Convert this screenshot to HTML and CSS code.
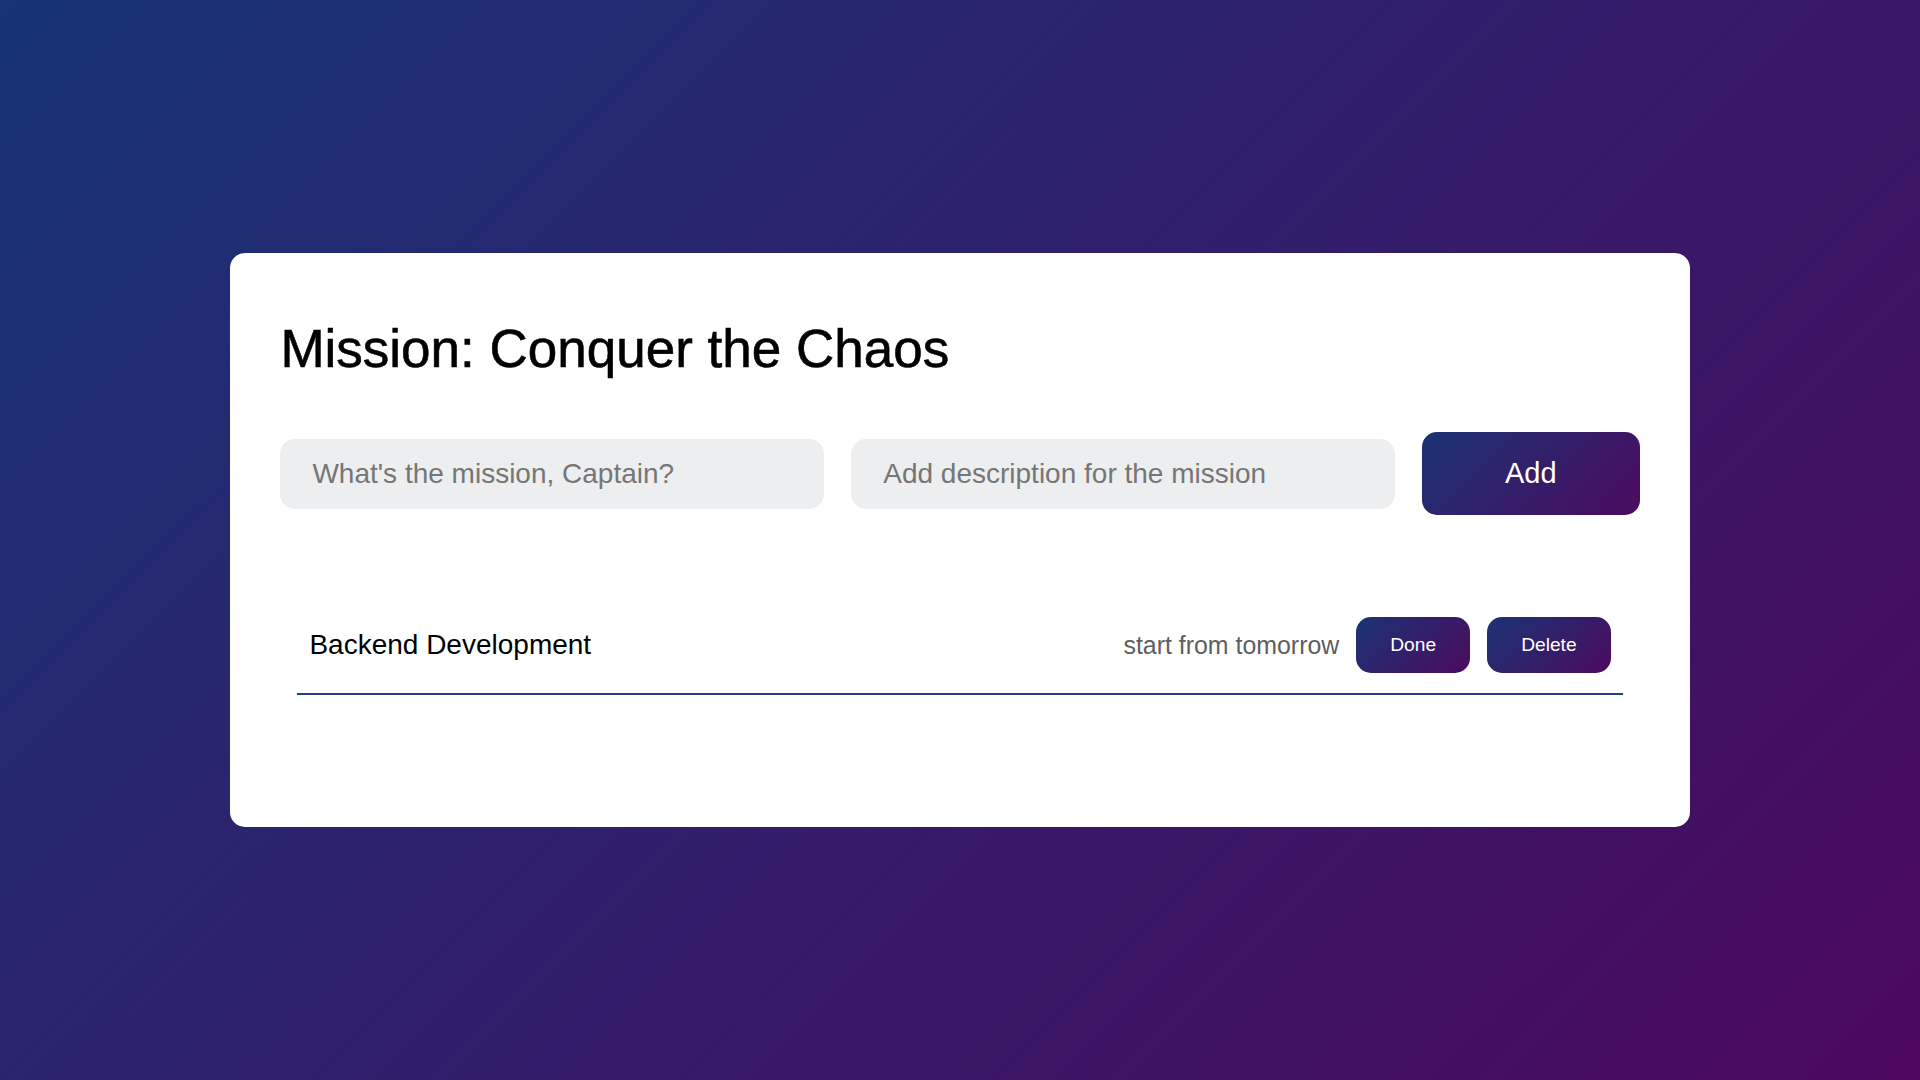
FILE: index.html
```html
<!DOCTYPE html>
<html lang="en">
<head>
<meta charset="UTF-8">
<title>Mission: Conquer the Chaos</title>
<link rel="stylesheet" href="styles.css">
</head>
<body>
<main class="card">
  <h1 class="title">Mission: Conquer the Chaos</h1>
  <form class="add-row">
    <input class="field" type="text" placeholder="What's the mission, Captain?">
    <input class="field" type="text" placeholder="Add description for the mission">
    <button class="add-btn" type="button">Add</button>
  </form>
  <ul class="list">
    <li class="item">
      <span class="item-title">Backend Development</span>
      <div class="item-right">
        <span class="item-desc">start from tomorrow</span>
        <button class="small-btn" type="button">Done</button>
        <button class="small-btn" type="button">Delete</button>
      </div>
    </li>
  </ul>
</main>
</body>
</html>
```

FILE: styles.css
```css
* { box-sizing: border-box; }

html, body {
  margin: 0;
  height: 100%;
}

body {
  font-family: "Liberation Sans", Arial, sans-serif;
  background: linear-gradient(135deg, #173476 0%, #4c085e 100%);
  display: flex;
  align-items: center;
  justify-content: center;
  min-height: 1080px;
}

.card {
  width: 76%;
  background: #ffffff;
  border-radius: 15px;
  padding: 50px;
}

.title {
  margin: 15px 0 0 0;
  font-size: 53px;
  font-weight: 400;
  color: #000;
  line-height: normal;
  -webkit-text-stroke: 0.6px #000;
}

.add-row {
  margin: 53px 0 0 0;
  display: flex;
  align-items: center;
  gap: 2%;
}

.field {
  flex: none;
  width: 40%;
  height: 70px;
  padding: 0 32px;
  border: none;
  border-radius: 15px;
  background: #eceef0;
  font-family: "Liberation Sans", Arial, sans-serif;
  font-size: 28px;
  color: #333;
  outline: none;
}

.field::placeholder {
  color: #767676;
}

.add-btn {
  flex: none;
  width: 16%;
  height: 83px;
  border: none;
  border-radius: 15px;
  background: linear-gradient(135deg, #1b3374 0%, #4c0b5f 100%);
  color: #fff;
  font-family: "Liberation Sans", Arial, sans-serif;
  font-size: 29px;
  cursor: pointer;
}

.list {
  list-style: none;
  margin: 82px 17px 82px 17px;
  padding: 0;
}

.item {
  display: flex;
  align-items: center;
  justify-content: space-between;
  padding: 20px 12px;
  border-bottom: 2px solid #243f7c;
}

.item-title {
  font-size: 28px;
  color: #000;
}

.item-right {
  display: flex;
  align-items: center;
  gap: 17px;
}

.item-desc {
  font-size: 24.9px;
  color: #5e5e5e;
}

.small-btn {
  height: 56px;
  padding: 0 34px;
  border: none;
  border-radius: 15px;
  background: linear-gradient(135deg, #1b3374 0%, #4c0b5f 100%);
  color: #fff;
  font-family: "Liberation Sans", Arial, sans-serif;
  font-size: 19.2px;
  cursor: pointer;
}
```
